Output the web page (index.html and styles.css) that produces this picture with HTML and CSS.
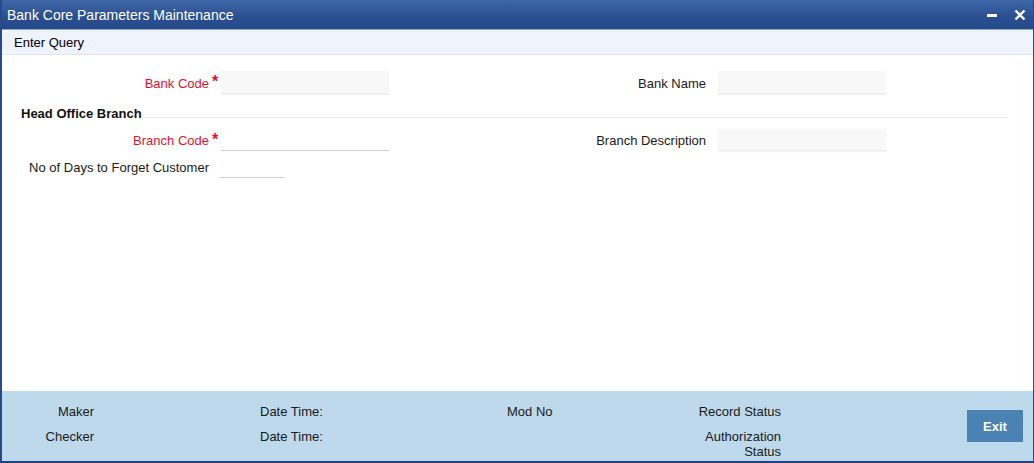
FILE: index.html
```html
<!DOCTYPE html>
<html lang="en">
<head>
  <meta charset="UTF-8" />
  <title>Bank Core Parameters Maintenance</title>
  <link rel="stylesheet" href="styles.css">
</head>
<body>
  <div class="window">
    <div class="title-bar">
      <span class="title">Bank Core Parameters Maintenance</span>
      <div class="win-btns">
        <span class="win-min"></span>
        <svg class="win-close" width="12" height="12" viewBox="0 0 12 12">
          <path d="M1.5 1.5 L10.5 10.5 M10.5 1.5 L1.5 10.5" stroke="#fff" stroke-width="2.4" />
        </svg>
      </div>
    </div>

    <div class="menu-bar">
      <span class="menu-item">Enter Query</span>
    </div>

    <div class="form">
      <div class="row row-top">
        <label class="lbl lbl-left req-lbl">Bank Code</label>
        <span class="req">*</span>
        <div class="field field-grey"></div>
        <label class="lbl lbl-right">Bank Name</label>
        <div class="field field-grey"></div>
      </div>

      <div class="section-head">
        <span class="section-title">Head Office Branch</span>
        <span class="section-line"></span>
      </div>

      <div class="row row-branch">
        <label class="lbl lbl-left req-lbl">Branch Code</label>
        <span class="req">*</span>
        <div class="field field-line"></div>
        <label class="lbl lbl-right">Branch Description</label>
        <div class="field field-grey"></div>
      </div>

      <div class="row row-days">
        <label class="lbl lbl-left">No of Days to Forget Customer</label>
        <span class="req"></span>
        <div class="field field-line field-short"></div>
      </div>
    </div>

    <div class="footer">
      <span class="f-lbl f-maker r1">Maker</span>
      <span class="f-lbl f-date r1">Date Time:</span>
      <span class="f-lbl f-mod r1">Mod No</span>
      <span class="f-lbl f-status r1">Record Status</span>

      <span class="f-lbl f-maker r2">Checker</span>
      <span class="f-lbl f-date r2">Date Time:</span>
      <span class="f-lbl f-status r2">Authorization<br>Status</span>

      <button class="exit-btn">Exit</button>
    </div>
  </div>
</body>
</html>
```

FILE: styles.css
```css
* {
  box-sizing: border-box;
}

body {
  margin: 0;
  font-family: "Liberation Sans", Arial, sans-serif;
  font-size: 13px;
  color: #1a1a1a;
  background: #fff;
}

.window {
  width: 1034px;
  height: 463px;
  display: flex;
  flex-direction: column;
  border-left: 2px solid #264a8a;
  border-right: 1px solid #264a8a;
  border-bottom: 2px solid #1f427f;
  background: #fff;
  overflow: hidden;
}

.title-bar {
  height: 30px;
  flex-shrink: 0;
  margin-left: -2px;
  margin-right: -1px;
  display: flex;
  align-items: center;
  justify-content: space-between;
  padding: 0 8px 0 7px;
  background: linear-gradient(#3e67a8, #2a4f90 60%, #264a8a);
  border-bottom: 1px solid #8fa8c8;
}

.title {
  color: #fff;
  font-size: 14px;
}

.win-btns {
  display: flex;
  align-items: center;
  gap: 17px;
}

.win-min {
  display: block;
  width: 10px;
  height: 3px;
  background: #fff;
  margin-top: 1px;
}

.win-close {
  display: block;
}

.menu-bar {
  height: 25px;
  flex-shrink: 0;
  display: flex;
  align-items: center;
  padding-left: 12px;
  background: #eef3fc;
  border-bottom: 1px solid #dfe3ea;
}

.menu-item {
  font-size: 13px;
  color: #000;
  margin-top: 1px;
}

.form {
  flex: 1;
  padding-top: 16px;
}

.row {
  display: flex;
  align-items: center;
}

.row-top {
  height: 23px;
}

.row-branch {
  height: 22px;
  margin-top: 7px;
}

.row-days {
  height: 22px;
  margin-top: 5px;
}

.lbl {
  text-align: right;
  white-space: nowrap;
  color: #1a1a1a;
  padding-top: 1px;
}

.lbl-left {
  width: 207px;
}

.lbl-right {
  width: 329px;
  padding-right: 12px;
}

.req-lbl {
  color: #e8112d;
}

.req {
  width: 12px;
  align-self: flex-start;
  color: #e8112d;
  font-size: 16px;
  font-weight: bold;
  line-height: 16px;
  padding-left: 3px;
  margin-top: 3px;
}

.field {
  width: 168px;
  height: 100%;
}

.field-grey {
  background: #f8f8f8;
  border-bottom: 1px solid #ececec;
  box-shadow: 0 1px 1px #f2f2f2;
}

.field-line {
  background: #fff;
  border-bottom: 1px solid #cfcfcf;
}

.field-short {
  width: 64px;
  margin-left: -1px;
}

.section-head {
  height: 18px;
  margin-top: 10px;
  display: flex;
  padding-left: 19px;
}

.section-title {
  font-weight: bold;
  font-size: 13px;
  line-height: 18px;
  color: #111;
  padding-top: 1px;
}

.section-line {
  width: 864px;
  height: 1px;
  margin-top: 13px;
  margin-left: 2px;
  background: #ebebeb;
}

.footer {
  height: 70px;
  flex-shrink: 0;
  background: #bed8ec;
  display: grid;
  grid-template-columns: 92px 166px 247px 274px 186px 56px;
  grid-template-rows: 25px 25px;
  padding-top: 13px;
  align-items: start;
}

.f-lbl {
  line-height: 15px;
  color: #1a1a1a;
  white-space: nowrap;
}

.r1 {
  grid-row: 1;
}

.r2 {
  grid-row: 2;
}

.f-maker {
  grid-column: 1;
  text-align: right;
}

.f-date {
  grid-column: 3;
}

.f-mod {
  grid-column: 4;
}

.f-status {
  grid-column: 4;
  text-align: right;
}

.exit-btn {
  grid-column: 6;
  grid-row: 1 / span 2;
  width: 56px;
  height: 32px;
  margin-top: 6px;
  border: none;
  background: #4a82b4;
  color: #fff;
  font-family: "Liberation Sans", Arial, sans-serif;
  font-size: 13px;
  font-weight: bold;
  cursor: pointer;
}
```
